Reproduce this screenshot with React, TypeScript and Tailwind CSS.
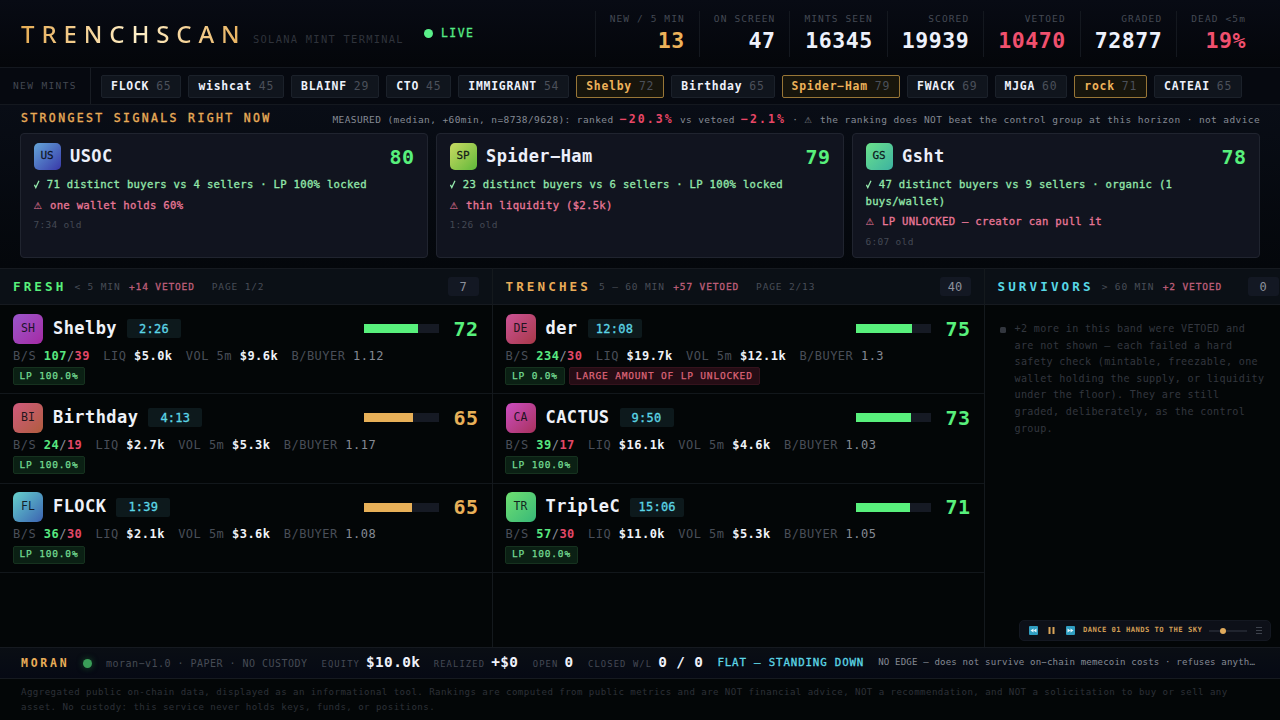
import { FC } from "react";

type Stat = { label: string; value: string; color: string };
type Mint = { name: string; score: number; hot?: boolean };
type Signal = {
  initials: string;
  name: string;
  score: number;
  good: string;
  bad: string;
  age: string;
  avatar: string;
};
type Token = {
  initials: string;
  name: string;
  age: string;
  score: number;
  fill: number;
  buys: number;
  sells: number;
  liq: string;
  vol: string;
  perBuyer: string;
  lp: string;
  warning?: string;
  avatar: string;
};

const stats: Stat[] = [
  { label: "NEW / 5 MIN", value: "13", color: "text-[#edb25a]" },
  { label: "ON SCREEN", value: "47", color: "text-[#eef1fb]" },
  { label: "MINTS SEEN", value: "16345", color: "text-[#eef1fb]" },
  { label: "SCORED", value: "19939", color: "text-[#eef1fb]" },
  { label: "VETOED", value: "10470", color: "text-[#f0506e]" },
  { label: "GRADED", value: "72877", color: "text-[#eef1fb]" },
  { label: "DEAD <5m", value: "19%", color: "text-[#f0506e]" },
];

const mints: Mint[] = [
  { name: "FLOCK", score: 65 },
  { name: "wishcat", score: 45 },
  { name: "BLAINF", score: 29 },
  { name: "CTO", score: 45 },
  { name: "IMMIGRANT", score: 54 },
  { name: "Shelby", score: 72, hot: true },
  { name: "Birthday", score: 65 },
  { name: "Spider−Ham", score: 79, hot: true },
  { name: "FWACK", score: 69 },
  { name: "MJGA", score: 60 },
  { name: "rock", score: 71, hot: true },
  { name: "CATEAI", score: 65 },
];

const signals: Signal[] = [
  {
    initials: "US",
    name: "USOC",
    score: 80,
    good: "71 distinct buyers vs 4 sellers · LP 100% locked",
    bad: "one wallet holds 60%",
    age: "7:34 old",
    avatar: "from-[#66a5d8] to-[#3a36a8]",
  },
  {
    initials: "SP",
    name: "Spider−Ham",
    score: 79,
    good: "23 distinct buyers vs 6 sellers · LP 100% locked",
    bad: "thin liquidity ($2.5k)",
    age: "1:26 old",
    avatar: "from-[#c8da62] to-[#5cb83a]",
  },
  {
    initials: "GS",
    name: "Gsht",
    score: 78,
    good: "47 distinct buyers vs 9 sellers · organic (1 buys/wallet)",
    bad: "LP UNLOCKED — creator can pull it",
    age: "6:07 old",
    avatar: "from-[#6be28a] to-[#3cb2a0]",
  },
];

const fresh: Token[] = [
  { initials: "SH", name: "Shelby", age: "2:26", score: 72, fill: 72, buys: 107, sells: 39, liq: "$5.0k", vol: "$9.6k", perBuyer: "1.12", lp: "LP 100.0%", avatar: "from-[#9a55cc] to-[#a428a4]" },
  { initials: "BI", name: "Birthday", age: "4:13", score: 65, fill: 65, buys: 24, sells: 19, liq: "$2.7k", vol: "$5.3k", perBuyer: "1.17", lp: "LP 100.0%", avatar: "from-[#d05a7c] to-[#b05c3c]" },
  { initials: "FL", name: "FLOCK", age: "1:39", score: 65, fill: 64, buys: 36, sells: 30, liq: "$2.1k", vol: "$3.6k", perBuyer: "1.08", lp: "LP 100.0%", avatar: "from-[#68d2cc] to-[#3d62b0]" },
];

const trenches: Token[] = [
  { initials: "DE", name: "der", age: "12:08", score: 75, fill: 74, buys: 234, sells: 30, liq: "$19.7k", vol: "$12.1k", perBuyer: "1.3", lp: "LP 0.0%", warning: "LARGE AMOUNT OF LP UNLOCKED", avatar: "from-[#cc5296] to-[#a83848]" },
  { initials: "CA", name: "CACTUS", age: "9:50", score: 73, fill: 73, buys: 39, sells: 17, liq: "$16.1k", vol: "$4.6k", perBuyer: "1.03", lp: "LP 100.0%", avatar: "from-[#cc4cc2] to-[#a8305c]" },
  { initials: "TR", name: "TripleC", age: "15:06", score: 71, fill: 71, buys: 57, sells: 30, liq: "$11.0k", vol: "$5.3k", perBuyer: "1.05", lp: "LP 100.0%", avatar: "from-[#6ee070] to-[#36b878]" },
];

const Header: FC = () => (
  <header className="flex h-[68px] items-center border-b border-[#14181f] bg-gradient-to-b from-[#080b14] to-[#04060a] px-5">
    <div className="flex flex-1 items-center">
      <h1 className="w-[233px] bg-gradient-to-r from-[#e6ac52] via-[#fff0c8] to-[#e6ac52] bg-clip-text pl-px font-['Noto_Sans','Open_Sans',sans-serif] text-[24px] leading-[34px] font-medium tracking-[6.9px] text-transparent">
        TRENCHSCAN
      </h1>
      <span className="w-[171px] pt-[12px] text-[10.4px] tracking-[1.29px] text-[#2f333b]">SOLANA MINT TERMINAL</span>
      <span className="flex items-center gap-[8px] text-[11.4px] tracking-[1.5px] text-[#56ec86] [-webkit-text-stroke:0.3px]">
        <span className="h-[9px] w-[9px] rounded-full bg-[#5af08a]" />
        LIVE
      </span>
    </div>
    <div className="flex">
      {stats.map((stat) => (
        <div key={stat.label} className="flex h-[46px] flex-col items-end border-l border-[#14181f] px-[14px]">
          <span className="text-[9.5px] leading-[15px] tracking-[1.12px] text-[#444954]">{stat.label}</span>
          <span className={`mt-px text-[21.5px] leading-[28px] font-bold tracking-[0.55px] ${stat.color}`}>{stat.value}</span>
        </div>
      ))}
    </div>
  </header>
);

const Ticker: FC = () => (
  <div className="flex h-[37px] items-center border-b border-[#14181f] bg-[#060910]">
    <div className="flex h-full w-[91px] shrink-0 items-center border-r border-[#181c23] pl-[13px] text-[9.5px] tracking-[1.38px] text-[#434852]">
      NEW MINTS
    </div>
    <div className="flex gap-[7px] pl-[10px]">
      {mints.map((mint) => (
        <div
          key={mint.name}
          className={`flex h-[23px] items-center gap-[7px] rounded-[2px] border px-[9px] pt-px text-[11.4px] tracking-[0.77px] whitespace-nowrap ${
            mint.hot ? "border-[#987637] bg-[#17150c] text-[#edb25a]" : "border-[#1b212a] bg-[#10151d] text-[#eef1fb]"
          }`}
        >
          <span className="font-bold">{mint.name}</span>
          <span className="text-[#4b505a]">{mint.score}</span>
        </div>
      ))}
    </div>
  </div>
);

const SignalCard: FC<{ signal: Signal }> = ({ signal }) => (
  <div className="h-[125px] w-[408px] rounded-[4px] border border-[#20242f] bg-[#11141f] px-[12.5px] pt-[9px]">
    <div className="flex h-[27px] items-center">
      <div className={`flex h-[27px] w-[27px] items-center justify-center rounded-[5px] bg-gradient-to-br text-[11px] text-[#0a0d14]/90 [-webkit-text-stroke:0.3px] ${signal.avatar}`}>
        {signal.initials}
      </div>
      <span className="ml-[9.5px] flex-1 text-[17px] font-bold tracking-[0.43px] text-[#eceffa]">{signal.name}</span>
      <span className="text-[20px] font-bold tracking-[0.5px] text-[#58f07c]">{signal.score}</span>
    </div>
    <p className="mt-[6px] text-[10.6px] leading-[16.6px] tracking-[0.29px] text-[#94e8ac] [-webkit-text-stroke:0.3px]">
      <svg viewBox="0 0 7 10" className="mr-[0.7px] inline h-[9px] w-[6px] align-[-1px]">
        <path d="M.5 5.4l1.6 3.2L5.8.6" stroke="currentColor" strokeWidth="1.5" fill="none" />
      </svg>{" "}
      {signal.good}
    </p>
    <p className="mt-[4px] text-[10.6px] leading-[16.6px] tracking-[0.29px] text-[#ea7898] [-webkit-text-stroke:0.3px]">
      <span className="inline-block w-[9.8px] text-[13.5px] leading-none tracking-normal [-webkit-text-stroke:0px]">⚠</span> {signal.bad}
    </p>
    <p className="mt-[4px] text-[9.5px] leading-[15px] tracking-[0.3px] text-[#444954]">{signal.age}</p>
  </div>
);

const Strongest: FC = () => (
  <section className="h-[163px] bg-gradient-to-b from-[#090d16] to-[#04070b] px-5">
    <div className="flex h-[28px] items-center justify-between">
      <h2 className="pl-px text-[11.5px] tracking-[2.36px] text-[#e9ac58] [-webkit-text-stroke:0.35px]">STRONGEST SIGNALS RIGHT NOW</h2>
      <div className="pt-px text-[9.5px] tracking-[0.39px] whitespace-nowrap text-[#858a94]">
        MEASURED (median, +60min, n=8738/9628): ranked{" "}
        <b className="text-[11.5px] tracking-[2.1px] text-[#e94767]">−20.3%</b> vs vetoed{" "}
        <b className="text-[11.5px] tracking-[2.1px] text-[#e94767]">−2.1%</b> ·{" "}
        <span className="inline-block w-[9.5px] text-[12px] leading-none tracking-normal">⚠</span> the ranking does NOT beat the control group at this
        horizon · not advice
      </div>
    </div>
    <div className="flex gap-2">
      {signals.map((signal) => (
        <SignalCard key={signal.name} signal={signal} />
      ))}
    </div>
  </section>
);

const ColumnHead: FC<{ title: string; color: string; range: string; vetoed: string; page?: string; count: number }> = ({
  title,
  color,
  range,
  vetoed,
  page,
  count,
}) => (
  <div className="flex h-[37px] items-center border-y border-[#161a20] bg-[#0b1016] px-[13px] text-[9.5px] tracking-[0.86px] whitespace-nowrap text-[#484d57]">
    <h3 className={`pt-px text-[12.6px] font-bold tracking-[3.1px] ${color}`}>{title}</h3>
    <span className="ml-[8px] pt-px">{range}</span>
    <span className="ml-[8.5px] pt-px text-[#bf5f7a] [-webkit-text-stroke:0.3px]">{vetoed}</span>
    {page && <span className="ml-[17px] pt-px">{page}</span>}
    <span className="ml-auto flex h-[19px] w-[31px] items-center justify-center rounded-[3px] bg-[#131823] text-[12px] tracking-normal text-[#8b909b]">
      {count}
    </span>
  </div>
);

const Metric: FC<{ label: string; value: string }> = ({ label, value }) => (
  <span>
    {label} <b className="text-[#eff2f7]">{value}</b>
  </span>
);

const TokenRow: FC<{ token: Token }> = ({ token }) => {
  const strong = token.score >= 70;
  return (
    <div className="h-[89.3px] border-b border-[#12171b] px-[13px] pt-[8.5px]">
      <div className="flex h-[30px] items-center">
        <div className={`flex h-[30px] w-[30px] items-center justify-center rounded-[6px] bg-gradient-to-br text-[11.5px] text-[#0a0d14]/90 ${token.avatar}`}>
          {token.initials}
        </div>
        <span className="ml-[10px] text-[17px] font-bold tracking-[0.43px] text-[#eef1f8]">{token.name}</span>
        <span className="ml-[10px] flex h-[19px] w-[54px] items-center justify-center rounded-[2px] bg-[#0d191c] text-[12px] tracking-[0.25px] text-[#5cd6e6] [-webkit-text-stroke:0.3px]">
          {token.age}
        </span>
        <div className="ml-auto h-[9px] w-[75px] bg-[#161a24]">
          <div className={`h-full ${strong ? "bg-[#58f07c]" : "bg-[#e8b058]"}`} style={{ width: `${token.fill}%` }} />
        </div>
        <span className={`ml-[14px] text-[20px] font-bold tracking-[0.5px] ${strong ? "text-[#58f07c]" : "text-[#e8b058]"}`}>{token.score}</span>
      </div>
      <div className="mt-[4px] flex h-[16px] items-center gap-[13.3px] text-[12px] tracking-[0.47px] whitespace-nowrap text-[#494e58]">
        <span>
          B/S <b className="text-[#58e880]">{token.buys}</b>
          <span className="text-[#8b909b]">/</span>
          <b className="text-[#e24867]">{token.sells}</b>
        </span>
        <Metric label="LIQ" value={token.liq} />
        <Metric label="VOL 5m" value={token.vol} />
        <span>
          B/BUYER <span className="text-[#858a94]">{token.perBuyer}</span>
        </span>
      </div>
      <div className="-ml-[0.5px] mt-[3.5px] flex gap-[4px] text-[9.5px] tracking-[0.83px] [-webkit-text-stroke:0.25px]">
        <span className="flex h-[18px] items-center rounded-[2px] border border-[#16321f] bg-[#0b2014] px-[6px] text-[#74dc92]">{token.lp}</span>
        {token.warning && (
          <span className="flex h-[18px] items-center rounded-[2px] border border-[#35131d] bg-[#250d15] px-[6px] text-[#dc6478]">{token.warning}</span>
        )}
      </div>
    </div>
  );
};

const Board: FC = () => (
  <main className="flex h-[379px] overflow-hidden">
    <section className="w-[492.5px] shrink-0 border-r border-[#14191d]">
      <ColumnHead title="FRESH" color="text-[#58f07c]" range="< 5 MIN" vetoed="+14 VETOED" page="PAGE 1/2" count={7} />
      {fresh.map((token) => (
        <TokenRow key={token.name} token={token} />
      ))}
    </section>
    <section className="w-[492px] shrink-0 border-r border-[#14191d]">
      <ColumnHead title="TRENCHES" color="text-[#e9ac58]" range="5 – 60 MIN" vetoed="+57 VETOED" page="PAGE 2/13" count={40} />
      {trenches.map((token) => (
        <TokenRow key={token.name} token={token} />
      ))}
    </section>
    <section className="w-[307px] shrink-0">
      <ColumnHead title="SURVIVORS" color="text-[#58d8e6]" range="> 60 MIN" vetoed="+2 VETOED" count={0} />
      <div className="flex pt-[16px] pl-[15px]">
        <span className="mt-[5.5px] h-[6px] w-[6px] shrink-0 rounded-[1.5px] bg-[#32363e]" />
        <p className="ml-[9px] w-[256px] text-[10.1px] leading-[16.6px] tracking-[0.33px] text-[#33373f]">
          +2 more in this band were VETOED and are not shown — each failed a hard safety check (mintable, freezable, one wallet holding the
          supply, or liquidity under the floor). They are still graded, deliberately, as the control group.
        </p>
      </div>
    </section>
  </main>
);

const SkipIcon: FC<{ back?: boolean }> = ({ back }) => (
  <svg viewBox="0 0 18 18" className={`h-[9px] w-[9px] ${back ? "-scale-x-100" : ""}`}>
    <rect width="18" height="18" rx="2" fill="#2f9dc0" />
    <path d="M3 5l6 4-6 4zM9 5l6 4-6 4z" fill="#e4f4fa" />
  </svg>
);

const Player: FC = () => (
  <div className="absolute top-[620px] left-[1019px] flex h-[21px] w-[252px] items-center rounded-[5px] border border-[#141821] bg-[#0d1018] pl-[9px]">
    <SkipIcon back />
    <svg viewBox="0 0 14 14" className="ml-[10px] h-[7px] w-[7px]">
      <path d="M1 0h4v14H1zM9 0h4v14H9z" fill="#d9a458" />
    </svg>
    <span className="ml-[11px]">
      <SkipIcon />
    </span>
    <span className="ml-[8px] text-[7.2px] font-bold tracking-[0.44px] whitespace-nowrap text-[#cf9c54]">DANCE 01 HANDS TO THE SKY</span>
    <span className="ml-[6.5px] flex h-[2px] w-[38px] items-center bg-[#20242e]">
      <span className="ml-[11px] h-[6px] w-[6px] rounded-full bg-[#e0aa5c]" />
    </span>
    <svg viewBox="0 0 12 14" className="ml-[9.5px] h-[7px] w-[6px]">
      <path d="M0 1h12M0 7h12M0 13h12" stroke="#3e434d" strokeWidth="2" />
    </svg>
  </div>
);

const BotStat: FC<{ label: string; value: string; gap: string }> = ({ label, value, gap }) => (
  <span className={`flex items-baseline gap-[6px] ${gap}`}>
    <span className="text-[8.8px] tracking-[1.12px] text-[#444954]">{label}</span>
    <b className="text-[14.4px] tracking-[0.38px] whitespace-pre text-[#eff2fa]">{value}</b>
  </span>
);

const BotBar: FC = () => (
  <div className="flex h-[32px] items-center border-y border-[#161a20] bg-gradient-to-b from-[#0a0e14] to-[#060914] pl-[21px] whitespace-nowrap">
    <b className="w-[62px] pt-px text-[11.5px] tracking-[2.75px] text-[#e9ac58]">MORAN</b>
    <span className="h-[9px] w-[9px] rounded-full bg-[#3a9e58] shadow-[0_0_6px_#17542c]" />
    <span className="ml-[14px] text-[10px] tracking-[0.48px] text-[#464b55]">moran−v1.0 · PAPER · NO CUSTODY</span>
    <BotStat label="EQUITY" value="$10.0k" gap="ml-[14px]" />
    <BotStat label="REALIZED" value="+$0" gap="ml-[13.5px]" />
    <BotStat label="OPEN" value="0" gap="ml-[14.5px]" />
    <BotStat label="CLOSED W/L" value="0 / 0" gap="ml-[14.5px]" />
    <span className="ml-[14px] text-[10.8px] tracking-[0.84px] text-[#5cd6e6] [-webkit-text-stroke:0.3px]">FLAT — STANDING DOWN</span>
    <span className="ml-[14px] text-[9.1px] tracking-[0.15px] text-[#858a94]">NO EDGE — does not survive on−chain memecoin costs · refuses anyth…</span>
  </div>
);

export default function App() {
  return (
    <div className="relative h-[720px] w-[1280px] overflow-hidden bg-[#030607] font-['DejaVu_Sans_Mono','Liberation_Mono',monospace]">
      <Header />
      <Ticker />
      <Strongest />
      <Board />
      <BotBar />
      <footer className="px-[21px] pt-[6px] text-[9.1px] leading-[14.6px] tracking-[0.44px] text-[#2d3138]">
        Aggregated public on-chain data, displayed as an informational tool. Rankings are computed from public metrics and are NOT financial advice,
        NOT a recommendation, and NOT a solicitation to buy or sell any asset. No custody: this service never holds keys, funds, or positions.
      </footer>
      <Player />
    </div>
  );
}
